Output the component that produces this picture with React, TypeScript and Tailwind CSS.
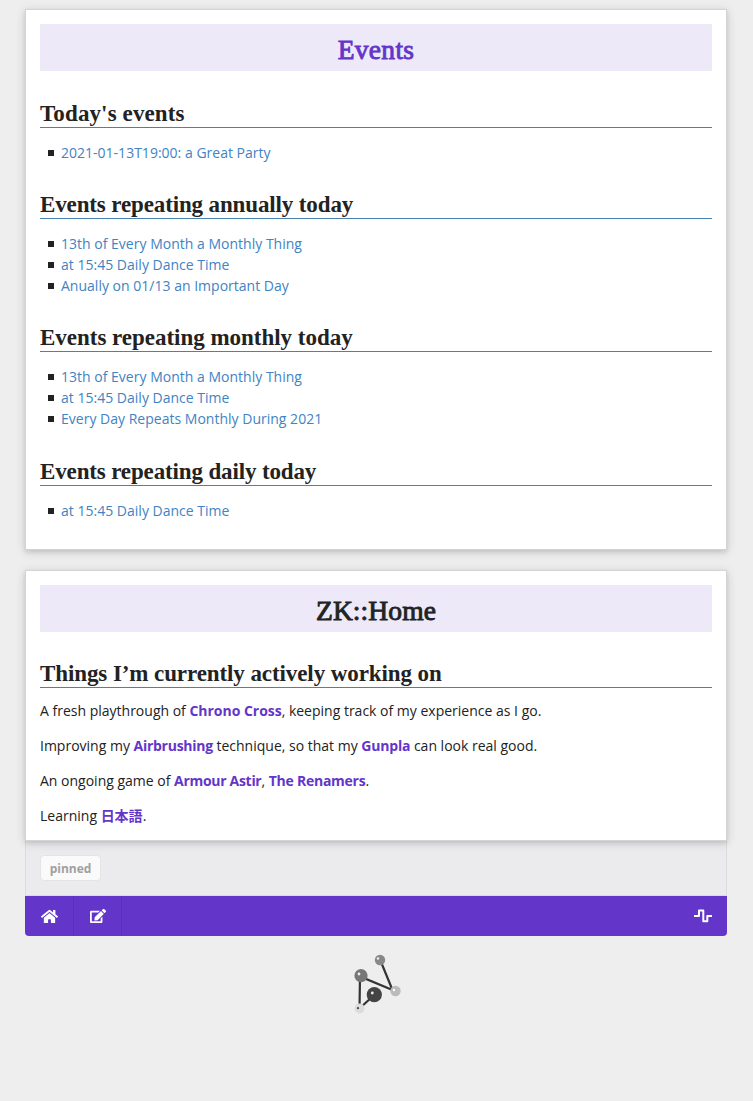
import React from "react";
import { FaHome, FaEdit } from "react-icons/fa";

const Title = ({ children, className }: { children: React.ReactNode; className: string }) => (
  <h1 className={`flex h-[47px] items-center justify-center bg-[#ede9f8] pt-[4px] font-['Liberation_Serif',serif] text-[27.5px] leading-none [-webkit-text-stroke:0.9px_currentColor] ${className}`}>
    <span>{children}</span>
  </h1>
);

const Heading = ({ children, className }: { children: React.ReactNode; className: string }) => (
  <h2 className={`h-[29px] whitespace-nowrap border-b border-[#4682b4] font-['Liberation_Serif',serif] text-[23px] font-bold leading-[30px] ${className}`}>
    <span>{children}</span>
  </h2>
);

const Events = ({ items }: { items: string[] }) => (
  <ul className="mt-[14px] mb-[27.3px]">
    {items.map((item) => (
      <li key={item} className="flex h-[21px] items-center pl-2">
        <span className="mt-px mr-[7px] size-[6px] bg-[#222]" />
        <a className="tracking-[0.01px] text-[#4183c4]">{item}</a>
      </li>
    ))}
  </ul>
);

const Tiddler = ({ children, className }: { children: React.ReactNode; className: string }) => (
  <a className={`font-bold text-[#6435c9] ${className}`}>{children}</a>
);

const Logo = () => (
  <svg width="48" height="60" viewBox="0 0 48 60" fill="none">
    <path d="M27 5.5 39.5 36 7 22.5 6.5 54.5 20 42" stroke="#333" strokeWidth="2.2" />
    <circle cx="27" cy="6" r="5.2" fill="#888" />
    <circle cx="25" cy="4.5" r="1.2" fill="#eee" />
    <circle cx="8" cy="21.7" r="6.6" fill="#777" />
    <circle cx="6" cy="20" r="1.4" fill="#eee" />
    <circle cx="42.5" cy="37" r="5.2" fill="#bbb" />
    <circle cx="41" cy="36" r="1.2" fill="#fff" />
    <circle cx="21.3" cy="40.7" r="7.6" fill="#444" />
    <circle cx="19.3" cy="39" r="1.4" fill="#eee" />
    <circle cx="6.6" cy="54.4" r="5" fill="#dcdcdc" />
    <circle cx="5" cy="54.2" r="1.1" fill="#444" />
  </svg>
);

const card = "border border-[#d4d4d5] bg-white px-[14px] pt-[14px] shadow-[0_2px_4px_0_rgba(34,36,38,0.12),0_2px_10px_0_rgba(34,36,38,0.15)]";

export default function App() {
  return (
    <div className="h-[1101px] bg-[#eee] px-[25px] pt-[9px] pr-[26px] font-['Open_Sans','Noto_Sans_CJK_JP',sans-serif] text-[14px] leading-[21px] text-[#222]">
      <section className={`${card} h-[541px]`}>
        <Title className="tracking-[0.3px] text-[#6435c9]">Events</Title>
        <Heading className="mt-[27.7px] tracking-[0.12px]">Today's events</Heading>
        <Events items={["2021-01-13T19:00: a Great Party"]} />
        <Heading className="tracking-[-0.13px]">Events repeating annually today</Heading>
        <Events items={["13th of Every Month a Monthly Thing", "at 15:45 Daily Dance Time", "Anually on 01/13 an Important Day"]} />
        <Heading className="tracking-[-0.02px]">Events repeating monthly today</Heading>
        <Events items={["13th of Every Month a Monthly Thing", "at 15:45 Daily Dance Time", "Every Day Repeats Monthly During 2021"]} />
        <Heading className="tracking-[-0.14px]">Events repeating daily today</Heading>
        <Events items={["at 15:45 Daily Dance Time"]} />
      </section>

      <section className={`${card} h-[271px] mt-5 relative`}>
        <Title className="tracking-[0.1px] text-[#222]">ZK::Home</Title>
        <Heading className="mt-[27px] tracking-[-0.09px]">Things I’m currently actively working on</Heading>
        <div className="mt-3 flex flex-col gap-[14px] whitespace-nowrap">
          <p>A fresh playthrough of <Tiddler className="tracking-[-0.03px]">Chrono Cross</Tiddler>, keeping track of my experience as I go.</p>
          <p>Improving my <Tiddler className="tracking-[-0.27px]">Airbrushing</Tiddler> technique, so that my <Tiddler className="tracking-[-0.2px]">Gunpla</Tiddler> can look real good.</p>
          <p>An ongoing game of <Tiddler className="tracking-[-0.3px]">Armour Astir</Tiddler>, <Tiddler className="tracking-[-0.25px]">The Renamers</Tiddler>.</p>
          <p className="h-[21px]">Learning <Tiddler className="">日本語</Tiddler>.</p>
        </div>
      </section>

      <div className="h-[55px] border border-t-0 border-[#dbdbdc] bg-[#ebebed] px-[14px] pt-[14px]">
        <span className="inline-flex h-[26px] w-[61px] items-center justify-center rounded border border-[#e4e4e5] bg-[#fafafa] text-[12px] font-bold text-[#a0a0a0]">pinned</span>
      </div>

      <nav className="flex h-10 items-stretch rounded-b bg-[#6435c9] text-white">
        <a className="flex w-[49px] items-center justify-center border-r border-[#5c30bd]"><FaHome size={17} /></a>
        <a className="flex w-12 items-center justify-center border-r border-[#5c30bd]"><FaEdit size={16} /></a>
        <a className="ml-auto flex w-12 items-center justify-center">
          <svg width="18" height="14" viewBox="0 0 18 14" fill="none" stroke="currentColor" strokeWidth="2">
            <path d="M0.5 7H5V1.5H9.3V12.2H13.3V7H17.5" strokeLinejoin="round" strokeLinecap="round" />
          </svg>
        </a>
      </nav>

      <div className="flex justify-center pt-[18px] pl-[2px]">
        <Logo />
      </div>
    </div>
  );
}
